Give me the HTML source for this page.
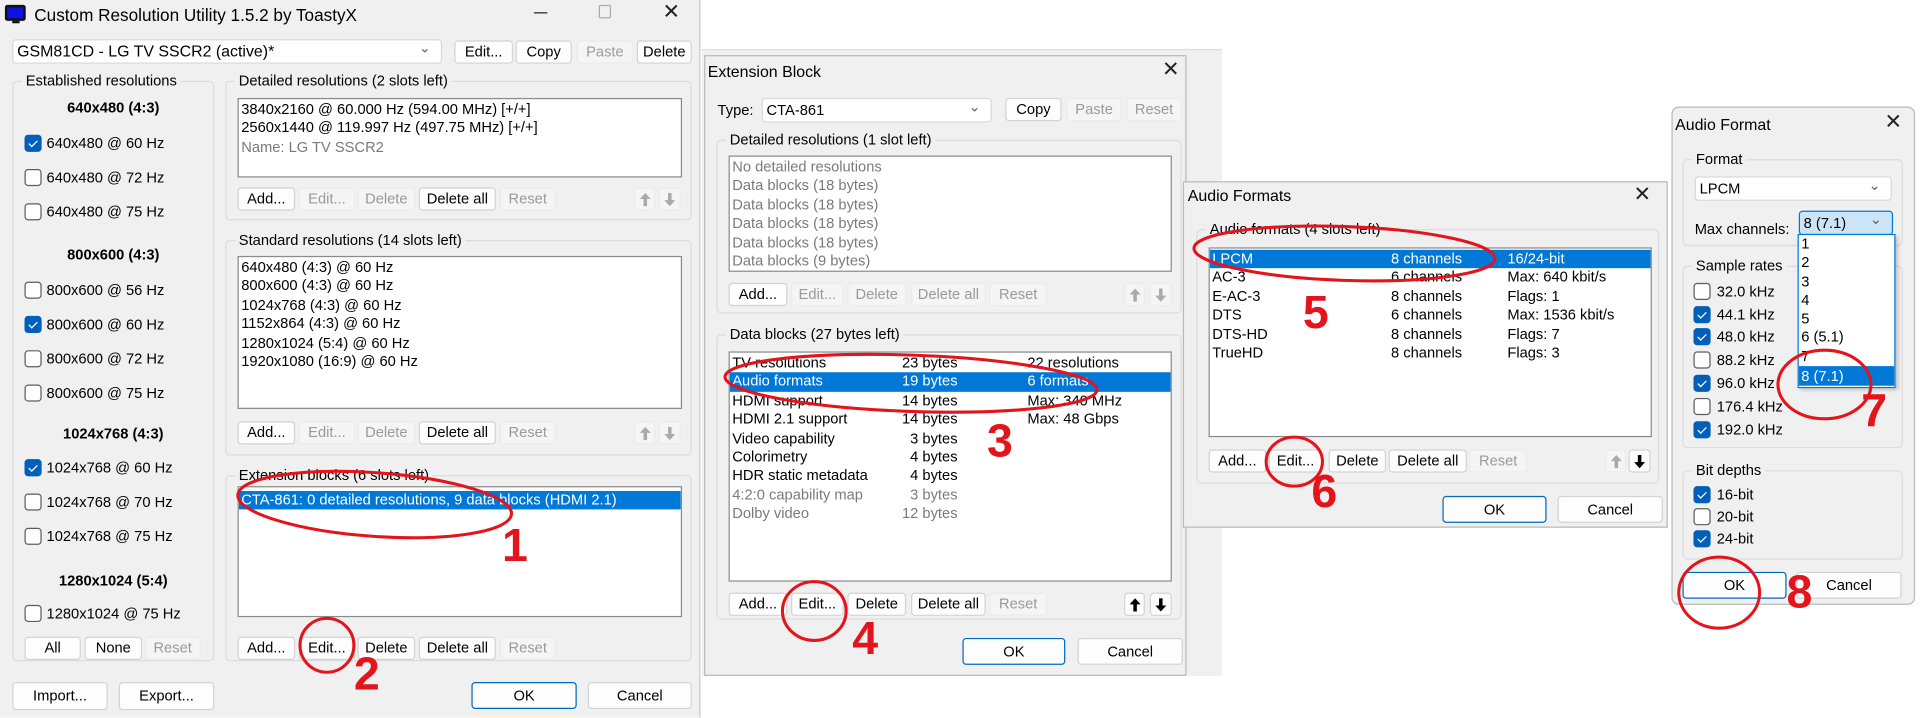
<!DOCTYPE html>
<html><head><meta charset="utf-8"><style>
*{margin:0;padding:0;box-sizing:border-box}
html,body{width:1920px;height:717px;overflow:hidden;background:#fff}
#s{position:absolute;left:0;top:0;width:1568px;height:586px;transform:scale(1.22449);transform-origin:0 0;font-family:"Liberation Sans",sans-serif;font-size:12px;color:#000}
#s div{position:absolute}
.w{background:#f0f0f0}
.dl{border:1px solid #b9b9b9;background:#f0f0f0}
.b{height:19px;line-height:17px;text-align:center;background:#fdfdfd;border:1px solid #d3d3d3;border-radius:3px;white-space:nowrap}
.d{background:#f5f5f5;border-color:#ebebeb;color:#9a9a9a}
.ok{border:1px solid #0067c0;height:22px;line-height:20px}
.g{border:1px solid #dcdcdc;border-radius:4px}
.gt{background:#f0f0f0;padding:0 3px;white-space:nowrap;line-height:14px;top:-8px;left:7px}
.lb{background:#fff;border:1px solid #8a8a8a;overflow:hidden}
.r{position:relative!important;height:15.4px;line-height:15.4px;white-space:nowrap;padding-left:2px}
.sel{background:#0078d7;color:#fff}
.gr{color:#7a7a7a}
.cb{width:14px;height:14px;border:1px solid #5c5c5c;border-radius:3px;background:#fff}
.ck{background:#005fb8;border-color:#005fb8}
.ck::after{content:"";position:absolute;left:4px;top:2px;width:3px;height:6px;border:solid #fff;border-width:0 1.3px 1.3px 0;transform:rotate(45deg)}
.t{white-space:nowrap;line-height:14px}
.bh{font-weight:bold;text-align:center;width:165px;left:10px}
.cmb{background:#fff;border:1px solid #d8d8d8;border-radius:3px;height:20px;line-height:18px;padding-left:3px;white-space:nowrap}
.cmb::after{content:"⌄";position:absolute;right:8px;top:-3px;color:#666;font-size:12px}
.ar svg{position:absolute;left:50%;top:50%;transform:translate(-50%,-50%)}
</style></head><body><div id="s">

<svg width="0" height="0" style="position:absolute"><defs>
<symbol id="up" viewBox="0 0 10 12"><path d="M5 0 L10 5.5 H6.6 V12 H3.4 V5.5 H0 Z"/></symbol>
<symbol id="dn" viewBox="0 0 10 12"><path d="M5 12 L10 6.5 H6.6 V0 H3.4 V6.5 H0 Z"/></symbol>
</defs></svg>

<!-- Main window -->
<div class="w" style="left:0;top:0;width:572px;height:586px;border-right:1px solid #ccc"></div>
<div style="left:4px;top:4px;width:17px;height:13px;background:#1010e0;border:2px solid #111;border-radius:2px"></div>
<div style="left:10px;top:17px;width:6px;height:2px;background:#111"></div>
<div class="t" style="left:28px;top:4px;font-size:14px;line-height:16px">Custom Resolution Utility 1.5.2 by ToastyX</div>
<div style="left:436px;top:10px;width:11px;height:1px;background:#222"></div>
<div style="left:489px;top:4px;width:10px;height:11px;border:1px solid #aaa;border-radius:1px"></div>
<div class="t" style="left:541px;top:1px;font-size:17px;line-height:18px;color:#222">✕</div>

<div class="cmb" style="left:10px;top:32px;width:351px;font-size:13px">GSM81CD - LG TV SSCR2 (active)*</div>
<div class="b" style="left:371px;top:33px;width:48px">Edit...</div>
<div class="b" style="left:421px;top:33px;width:46px">Copy</div>
<div class="b d" style="left:471px;top:33px;width:46px">Paste</div>
<div class="b" style="left:520px;top:33px;width:45px">Delete</div>

<div class="g" style="left:10px;top:66px;width:165px;height:474px"><div class="gt">Established resolutions</div></div>
<div class="t bh" style="top:81px">640x480 (4:3)</div>
<div class="cb ck" style="left:20px;top:110px"></div><div class="t" style="left:38px;top:110px">640x480 @ 60 Hz</div>
<div class="cb" style="left:20px;top:138px"></div><div class="t" style="left:38px;top:138px">640x480 @ 72 Hz</div>
<div class="cb" style="left:20px;top:166px"></div><div class="t" style="left:38px;top:166px">640x480 @ 75 Hz</div>
<div class="t bh" style="top:201px">800x600 (4:3)</div>
<div class="cb" style="left:20px;top:230px"></div><div class="t" style="left:38px;top:230px">800x600 @ 56 Hz</div>
<div class="cb ck" style="left:20px;top:258px"></div><div class="t" style="left:38px;top:258px">800x600 @ 60 Hz</div>
<div class="cb" style="left:20px;top:286px"></div><div class="t" style="left:38px;top:286px">800x600 @ 72 Hz</div>
<div class="cb" style="left:20px;top:314px"></div><div class="t" style="left:38px;top:314px">800x600 @ 75 Hz</div>
<div class="t bh" style="top:347px">1024x768 (4:3)</div>
<div class="cb ck" style="left:20px;top:375px"></div><div class="t" style="left:38px;top:375px">1024x768 @ 60 Hz</div>
<div class="cb" style="left:20px;top:403px"></div><div class="t" style="left:38px;top:403px">1024x768 @ 70 Hz</div>
<div class="cb" style="left:20px;top:431px"></div><div class="t" style="left:38px;top:431px">1024x768 @ 75 Hz</div>
<div class="t bh" style="top:467px">1280x1024 (5:4)</div>
<div class="cb" style="left:20px;top:494px"></div><div class="t" style="left:38px;top:494px">1280x1024 @ 75 Hz</div>
<div class="b" style="left:20px;top:520px;width:46px">All</div>
<div class="b" style="left:69px;top:520px;width:47px">None</div>
<div class="b d" style="left:118px;top:520px;width:46px">Reset</div>

<div class="g" style="left:184px;top:66px;width:381px;height:114px"><div class="gt">Detailed resolutions (2 slots left)</div></div>
<div class="lb" style="left:194px;top:80px;width:363px;height:65px;padding-top:1px">
<div class="r">3840x2160 @ 60.000 Hz (594.00 MHz) [+/+]</div><div class="r">2560x1440 @ 119.997 Hz (497.75 MHz) [+/+]</div><div class="r gr">Name: LG TV SSCR2</div></div>
<div class="b" style="left:194px;top:153px;width:47px">Add...</div>
<div class="b d" style="left:244px;top:153px;width:46px">Edit...</div>
<div class="b d" style="left:292px;top:153px;width:47px">Delete</div>
<div class="b" style="left:342px;top:153px;width:63px">Delete all</div>
<div class="b d" style="left:408px;top:153px;width:46px">Reset</div>
<div class="b d ar" style="left:518px;top:153px;width:17px"><svg width="9" height="11" fill="#aaa"><use href="#up"/></svg></div>
<div class="b d ar" style="left:538px;top:153px;width:18px"><svg width="9" height="11" fill="#aaa"><use href="#dn"/></svg></div>

<div class="g" style="left:184px;top:196px;width:381px;height:176px"><div class="gt">Standard resolutions (14 slots left)</div></div>
<div class="lb" style="left:194px;top:209px;width:363px;height:125px;padding-top:1px">
<div class="r">640x480 (4:3) @ 60 Hz</div><div class="r">800x600 (4:3) @ 60 Hz</div><div class="r">1024x768 (4:3) @ 60 Hz</div><div class="r">1152x864 (4:3) @ 60 Hz</div><div class="r">1280x1024 (5:4) @ 60 Hz</div><div class="r">1920x1080 (16:9) @ 60 Hz</div></div>
<div class="b" style="left:194px;top:344px;width:47px">Add...</div>
<div class="b d" style="left:244px;top:344px;width:46px">Edit...</div>
<div class="b d" style="left:292px;top:344px;width:47px">Delete</div>
<div class="b" style="left:342px;top:344px;width:63px">Delete all</div>
<div class="b d" style="left:408px;top:344px;width:46px">Reset</div>
<div class="b d ar" style="left:518px;top:344px;width:17px"><svg width="9" height="11" fill="#aaa"><use href="#up"/></svg></div>
<div class="b d ar" style="left:538px;top:344px;width:18px"><svg width="9" height="11" fill="#aaa"><use href="#dn"/></svg></div>

<div class="g" style="left:184px;top:388px;width:381px;height:152px"><div class="gt">Extension blocks (6 slots left)</div></div>
<div class="lb" style="left:194px;top:397px;width:363px;height:107px;padding-top:3px">
<div class="r sel">CTA-861: 0 detailed resolutions, 9 data blocks (HDMI 2.1)</div></div>
<div class="b" style="left:194px;top:520px;width:47px">Add...</div>
<div class="b" style="left:244px;top:520px;width:46px">Edit...</div>
<div class="b" style="left:292px;top:520px;width:47px">Delete</div>
<div class="b" style="left:342px;top:520px;width:63px">Delete all</div>
<div class="b d" style="left:408px;top:520px;width:46px">Reset</div>

<div class="b" style="left:10px;top:557px;width:78px;height:23px;line-height:21px">Import...</div>
<div class="b" style="left:97px;top:557px;width:78px;height:23px;line-height:21px">Export...</div>
<div class="b ok" style="left:385px;top:557px;width:86px">OK</div>
<div class="b" style="left:480px;top:557px;width:85px;height:22px;line-height:20px">Cancel</div>

<!-- background copy behind extension dialog -->
<div class="w" style="left:573px;top:40px;width:425px;height:512px;border-top:1px solid #ddd"></div>

<!-- Extension Block dialog -->
<div class="dl" style="left:575px;top:45px;width:394px;height:507px"></div>
<div class="t" style="left:578px;top:52px;font-size:13px">Extension Block</div>
<div class="t" style="left:949px;top:48px;font-size:17px;line-height:18px;color:#222">✕</div>
<div class="t" style="left:586px;top:83px">Type:</div>
<div class="cmb" style="left:622px;top:80px;width:188px">CTA-861</div>
<div class="b" style="left:821px;top:80px;width:46px">Copy</div>
<div class="b d" style="left:871px;top:80px;width:45px">Paste</div>
<div class="b d" style="left:920px;top:80px;width:45px">Reset</div>

<div class="g" style="left:585px;top:114px;width:380px;height:142px"><div class="gt">Detailed resolutions (1 slot left)</div></div>
<div class="lb gr" style="left:595px;top:127px;width:362px;height:95px;padding-top:1px">
<div class="r">No detailed resolutions</div><div class="r">Data blocks (18 bytes)</div><div class="r">Data blocks (18 bytes)</div><div class="r">Data blocks (18 bytes)</div><div class="r">Data blocks (18 bytes)</div><div class="r">Data blocks (9 bytes)</div></div>
<div class="b" style="left:595px;top:231px;width:48px">Add...</div>
<div class="b d" style="left:646px;top:231px;width:43px">Edit...</div>
<div class="b d" style="left:692px;top:231px;width:48px">Delete</div>
<div class="b d" style="left:744px;top:231px;width:61px">Delete all</div>
<div class="b d" style="left:808px;top:231px;width:47px">Reset</div>
<div class="b d ar" style="left:918px;top:231px;width:17px"><svg width="9" height="11" fill="#aaa"><use href="#up"/></svg></div>
<div class="b d ar" style="left:939px;top:231px;width:18px"><svg width="9" height="11" fill="#aaa"><use href="#dn"/></svg></div>

<div class="g" style="left:585px;top:273px;width:380px;height:233px"><div class="gt">Data blocks (27 bytes left)</div></div>
<div class="lb" style="left:595px;top:287px;width:362px;height:188px;padding-top:1px">
<div class="r">TV resolutions<span style="position:absolute;right:174px">23 bytes</span><span style="position:absolute;left:243px">22 resolutions</span></div>
<div class="r sel">Audio formats<span style="position:absolute;right:174px">19 bytes</span><span style="position:absolute;left:243px">6 formats</span></div>
<div class="r">HDMI support<span style="position:absolute;right:174px">14 bytes</span><span style="position:absolute;left:243px">Max: 340 MHz</span></div>
<div class="r">HDMI 2.1 support<span style="position:absolute;right:174px">14 bytes</span><span style="position:absolute;left:243px">Max: 48 Gbps</span></div>
<div class="r">Video capability<span style="position:absolute;right:174px">3 bytes</span></div>
<div class="r">Colorimetry<span style="position:absolute;right:174px">4 bytes</span></div>
<div class="r">HDR static metadata<span style="position:absolute;right:174px">4 bytes</span></div>
<div class="r gr">4:2:0 capability map<span style="position:absolute;right:174px">3 bytes</span></div>
<div class="r gr">Dolby video<span style="position:absolute;right:174px">12 bytes</span></div></div>
<div class="b" style="left:595px;top:484px;width:48px">Add...</div>
<div class="b" style="left:646px;top:484px;width:43px">Edit...</div>
<div class="b" style="left:692px;top:484px;width:48px">Delete</div>
<div class="b" style="left:744px;top:484px;width:61px">Delete all</div>
<div class="b d" style="left:808px;top:484px;width:47px">Reset</div>
<div class="b ar" style="left:918px;top:484px;width:17px"><svg width="9" height="11" fill="#000"><use href="#up"/></svg></div>
<div class="b ar" style="left:939px;top:484px;width:18px"><svg width="9" height="11" fill="#000"><use href="#dn"/></svg></div>
<div class="b ok" style="left:786px;top:521px;width:84px">OK</div>
<div class="b" style="left:880px;top:521px;width:86px;height:22px;line-height:20px">Cancel</div>

<!-- Audio Formats dialog -->
<div class="dl" style="left:966px;top:148px;width:396px;height:283px"></div>
<div class="t" style="left:970px;top:153px;font-size:13px">Audio Formats</div>
<div class="t" style="left:1334px;top:150px;font-size:17px;line-height:18px;color:#222">✕</div>
<div class="g" style="left:977px;top:187px;width:378px;height:208px"><div class="gt">Audio formats (4 slots left)</div></div>
<div class="lb" style="left:987px;top:202px;width:362px;height:155px;padding-top:1px">
<div class="r sel">LPCM<span style="position:absolute;left:148px">8 channels</span><span style="position:absolute;left:243px">16/24-bit</span></div>
<div class="r">AC-3<span style="position:absolute;left:148px">6 channels</span><span style="position:absolute;left:243px">Max: 640 kbit/s</span></div>
<div class="r">E-AC-3<span style="position:absolute;left:148px">8 channels</span><span style="position:absolute;left:243px">Flags: 1</span></div>
<div class="r">DTS<span style="position:absolute;left:148px">6 channels</span><span style="position:absolute;left:243px">Max: 1536 kbit/s</span></div>
<div class="r">DTS-HD<span style="position:absolute;left:148px">8 channels</span><span style="position:absolute;left:243px">Flags: 7</span></div>
<div class="r">TrueHD<span style="position:absolute;left:148px">8 channels</span><span style="position:absolute;left:243px">Flags: 3</span></div></div>
<div class="b" style="left:987px;top:367px;width:47px">Add...</div>
<div class="b" style="left:1036px;top:367px;width:44px">Edit...</div>
<div class="b" style="left:1085px;top:367px;width:47px">Delete</div>
<div class="b" style="left:1134px;top:367px;width:64px">Delete all</div>
<div class="b d" style="left:1200px;top:367px;width:47px">Reset</div>
<div class="b d ar" style="left:1311px;top:367px;width:17px"><svg width="9" height="11" fill="#aaa"><use href="#up"/></svg></div>
<div class="b ar" style="left:1330px;top:367px;width:18px"><svg width="9" height="11" fill="#000"><use href="#dn"/></svg></div>
<div class="b ok" style="left:1178px;top:405px;width:85px">OK</div>
<div class="b" style="left:1272px;top:405px;width:86px;height:22px;line-height:20px">Cancel</div>

<!-- Audio Format dialog -->
<div class="dl" style="left:1365px;top:87px;width:199px;height:407px;border-radius:6px"></div>
<div class="t" style="left:1368px;top:95px;font-size:13px">Audio Format</div>
<div class="t" style="left:1539px;top:91px;font-size:17px;line-height:18px;color:#222">✕</div>
<div class="g" style="left:1374px;top:130px;width:180px;height:71px"><div class="gt">Format</div></div>
<div class="cmb" style="left:1384px;top:144px;width:161px">LPCM</div>
<div class="t" style="left:1384px;top:180px">Max channels:</div>
<div class="cmb" style="left:1469px;top:172px;width:77px;background:#cce4f7;border-color:#0078d7">8 (7.1)</div>
<div class="g" style="left:1374px;top:217px;width:180px;height:149px"><div class="gt">Sample rates</div></div>
<div class="cb" style="left:1383px;top:231px"></div><div class="t" style="left:1402px;top:231px">32.0 kHz</div>
<div class="cb ck" style="left:1383px;top:250px"></div><div class="t" style="left:1402px;top:250px">44.1 kHz</div>
<div class="cb ck" style="left:1383px;top:268px"></div><div class="t" style="left:1402px;top:268px">48.0 kHz</div>
<div class="cb" style="left:1383px;top:287px"></div><div class="t" style="left:1402px;top:287px">88.2 kHz</div>
<div class="cb ck" style="left:1383px;top:306px"></div><div class="t" style="left:1402px;top:306px">96.0 kHz</div>
<div class="cb" style="left:1383px;top:325px"></div><div class="t" style="left:1402px;top:325px">176.4 kHz</div>
<div class="cb ck" style="left:1383px;top:344px"></div><div class="t" style="left:1402px;top:344px">192.0 kHz</div>
<div class="lb" style="left:1468px;top:191px;width:80px;height:126px;border-color:#0078d7;box-shadow:2px 2px 3px rgba(0,0,0,.2)">
<div class="r" style="height:15.3px;line-height:15.3px">1</div><div class="r" style="height:15.3px;line-height:15.3px">2</div><div class="r" style="height:15.3px;line-height:15.3px">3</div><div class="r" style="height:15.3px;line-height:15.3px">4</div><div class="r" style="height:15.3px;line-height:15.3px">5</div><div class="r" style="height:15.3px;line-height:15.3px">6 (5.1)</div><div class="r" style="height:15.3px;line-height:15.3px">7</div><div class="r sel" style="height:16px;line-height:16px">8 (7.1)</div></div>
<div class="g" style="left:1374px;top:384px;width:180px;height:73px"><div class="gt">Bit depths</div></div>
<div class="cb ck" style="left:1383px;top:397px"></div><div class="t" style="left:1402px;top:397px">16-bit</div>
<div class="cb" style="left:1383px;top:415px"></div><div class="t" style="left:1402px;top:415px">20-bit</div>
<div class="cb ck" style="left:1383px;top:433px"></div><div class="t" style="left:1402px;top:433px">24-bit</div>
<div class="b ok" style="left:1374px;top:467px;width:85px">OK</div>
<div class="b" style="left:1467px;top:467px;width:86px;height:22px;line-height:20px">Cancel</div>

<!-- annotations -->
<svg style="position:absolute;left:0;top:0" width="1568" height="586" viewBox="0 0 1568 586">
<g fill="none" stroke="#e3141b" stroke-width="2.5">
<ellipse cx="306" cy="412" rx="112" ry="26" transform="rotate(4 306 412)"/>
<ellipse cx="267" cy="527" rx="22" ry="22"/>
<ellipse cx="744" cy="313" rx="152" ry="23" transform="rotate(2 744 313)"/>
<ellipse cx="665" cy="499" rx="26" ry="24"/>
<ellipse cx="1098" cy="207" rx="123" ry="22" transform="rotate(2 1098 207)"/>
<ellipse cx="1057" cy="377" rx="23" ry="20"/>
<ellipse cx="1490" cy="314" rx="38" ry="28"/>
<ellipse cx="1404" cy="484" rx="33" ry="29"/>
</g>
<g fill="#e3141b" font-family="Liberation Sans,sans-serif" font-weight="bold" font-size="38">
<text x="410" y="458">1</text><text x="289" y="563">2</text><text x="806" y="373">3</text><text x="696" y="534">4</text>
<text x="1064" y="268">5</text><text x="1071" y="414">6</text><text x="1520" y="348">7</text><text x="1459" y="496">8</text>
</g></svg>
</div></body></html>
